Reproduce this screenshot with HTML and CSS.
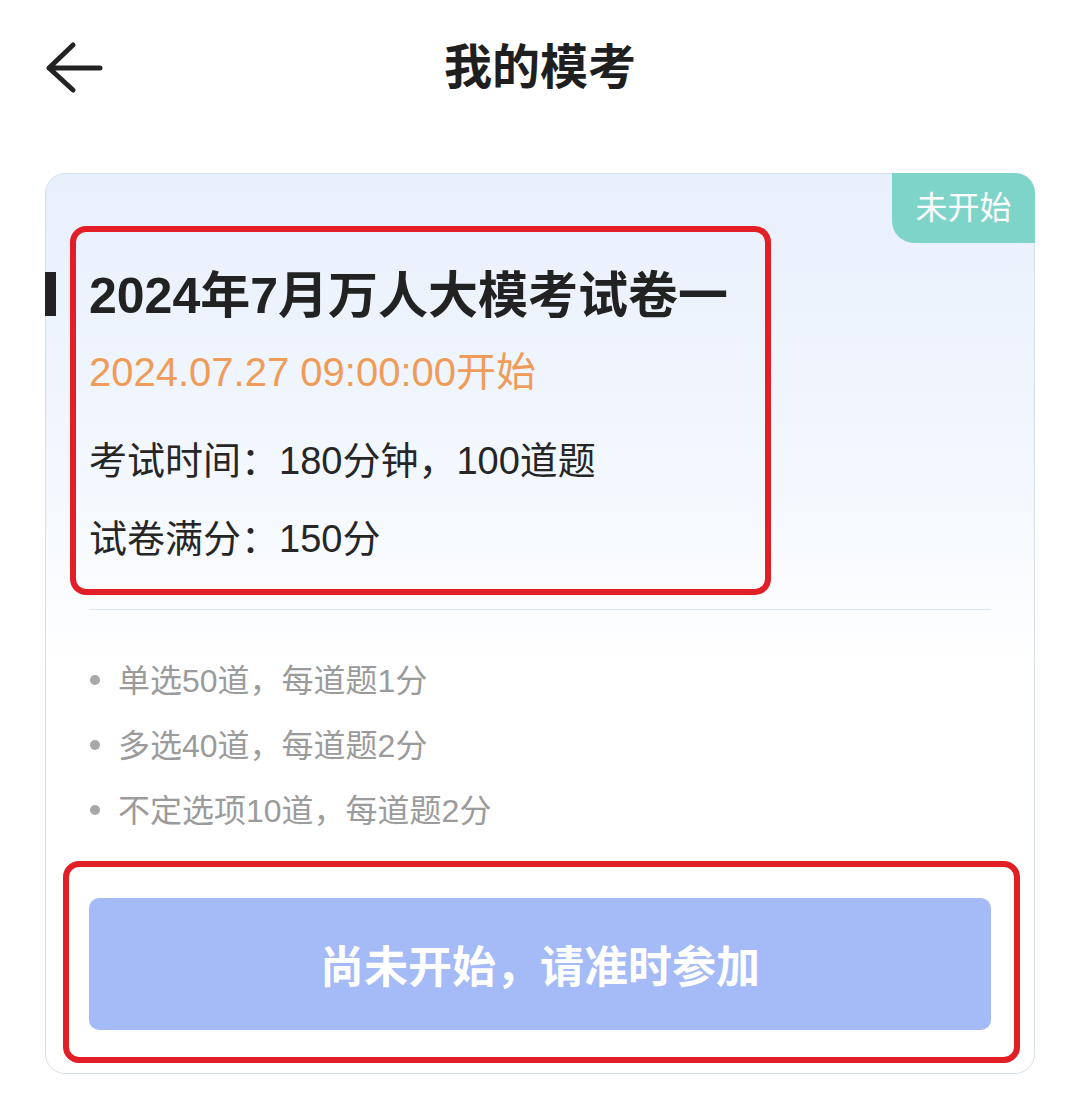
FILE: index.html
```html
<!DOCTYPE html>
<html lang="zh-CN">
<head>
<meta charset="utf-8">
<title>我的模考</title>
<link rel="stylesheet" href="styles.css">
</head>
<body>
<header class="topbar">
  <div class="back">
    <svg width="70" height="70" viewBox="0 0 70 70" aria-hidden="true">
      <path d="M9 35 L60 35 M33 12 L9 35 L33 57" fill="none" stroke="#222" stroke-width="5" stroke-linecap="round" stroke-linejoin="round"/>
    </svg>
  </div>
  <h1 class="page-title">我的模考</h1>
  <div class="spacer"></div>
</header>

<main class="card">
  <div class="badge">未开始</div>
  <section class="info">
    <h2 class="exam-title">2024年7月万人大模考试卷一</h2>
    <p class="exam-date">2024.07.27 09:00:00开始</p>
    <p class="exam-meta">考试时间：180分钟，100道题</p>
    <p class="exam-meta">试卷满分：150分</p>
  </section>
  <div class="divider"></div>
  <ul class="rules">
    <li>单选50道，每道题1分</li>
    <li>多选40道，每道题2分</li>
    <li>不定选项10道，每道题2分</li>
  </ul>
  <button class="start-btn" type="button">尚未开始，请准时参加</button>

  <div class="mark mark-info"></div>
  <div class="mark mark-btn"></div>
</main>
</body>
</html>
```

FILE: styles.css
```css
* { box-sizing: border-box; }

html, body {
  margin: 0;
  padding: 0;
  background: #ffffff;
}

body {
  font-family: "Liberation Sans", "Noto Sans CJK SC", sans-serif;
  color: #222222;
}

.topbar {
  height: 136px;
  display: grid;
  grid-template-columns: 1fr auto 1fr;
  align-items: center;
}

.back {
  padding-left: 40px;
  display: flex;
  align-items: center;
}

.back svg { display: block; }

.page-title {
  margin: 0;
  font-size: 48px;
  font-weight: 700;
  line-height: 136px;
  color: #1f1f1f;
}

.card {
  position: relative;
  margin: 37px 45px 0;
  border: 1px solid #d6e0ea;
  border-radius: 20px;
  background: linear-gradient(180deg, #e8f0fc 0%, #f4f8fe 35%, #ffffff 55%);
  padding: 92px 43px 43px;
}

.badge {
  position: absolute;
  top: -1px;
  right: -1px;
  width: 143px;
  height: 70px;
  background: #7fd4c9;
  color: #ffffff;
  font-size: 32px;
  line-height: 70px;
  text-align: center;
  border-radius: 0 20px 0 22px;
}

.info { display: flex; flex-direction: column; }

.exam-title {
  position: relative;
  margin: 0;
  font-size: 50px;
  font-weight: 700;
  line-height: 60px;
  color: #222222;
}

.exam-title::before {
  content: "";
  position: absolute;
  left: -44px;
  top: 6px;
  width: 11px;
  height: 44px;
  background: #222222;
}

.exam-date {
  margin: 21px 0 0;
  font-size: 40px;
  line-height: 50px;
  color: #ef9c5a;
}

.exam-meta {
  margin: 0;
  font-size: 38px;
  line-height: 78px;
  color: #262626;
}

.exam-date + .exam-meta { margin-top: 25px; }

.divider {
  height: 1px;
  background: #dce6f1;
  margin-top: 31px;
}

.rules {
  list-style: none;
  margin: 39px 0 0;
  padding: 0;
}

.rules li {
  display: flex;
  align-items: center;
  gap: 18px;
  font-size: 32px;
  line-height: 65px;
  color: #9b9b9b;
}

.rules li::before {
  content: "";
  width: 10px;
  height: 10px;
  border-radius: 50%;
  background: #a8a8a8;
  margin-left: 1px;
  margin-top: -4px;
  flex: none;
}

.start-btn {
  display: block;
  width: 100%;
  height: 132px;
  margin-top: 54px;
  border: 0;
  border-radius: 10px;
  background: #a4bbf7;
  color: #ffffff;
  font-family: inherit;
  font-size: 44px;
  font-weight: 700;
}

.mark {
  position: absolute;
  border: 6px solid #e21f26;
  border-radius: 16px;
  pointer-events: none;
}

.mark-info {
  left: 24px;
  top: 52px;
  width: 701px;
  height: 369px;
}

.mark-btn {
  left: 17px;
  top: 687px;
  width: 957px;
  height: 202px;
}
```
